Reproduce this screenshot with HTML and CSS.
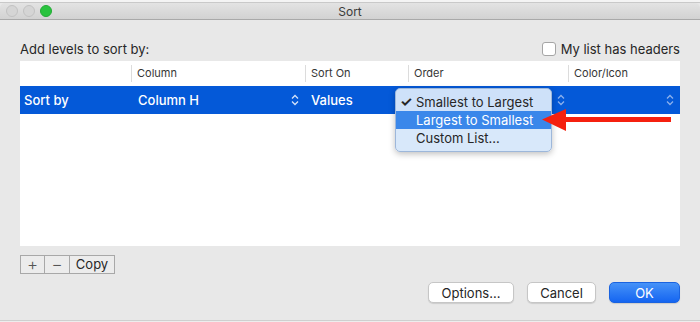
FILE: index.html
```html
<!DOCTYPE html>
<html lang="en">
<head>
    <meta charset="UTF-8">
    <title>Sort</title>
    <link rel="stylesheet" href="styles.css">
</head>
<body>
    <div class="sheet-strip"></div>
    <div class="window">
        <div class="titlebar">
            <div class="lights">
                <span class="light"></span>
                <span class="light"></span>
                <span class="light green"></span>
            </div>
            <div class="title">Sort</div>
        </div>

        <div class="content">
            <div class="top-row">
                <span>Add levels to sort by:</span>
                <label class="headers-check"><span class="box"></span>My list has headers</label>
            </div>

            <div class="table">
                <div class="row head">
                    <div class="cell c1"></div>
                    <div class="cell c2">Column</div>
                    <div class="cell c3">Sort On</div>
                    <div class="cell c4">Order</div>
                    <div class="cell c5">Color/Icon</div>
                </div>
                <div class="row selected">
                    <div class="cell c1">Sort by</div>
                    <div class="cell c2">Column H
                        <svg class="updown" width="8" height="12" viewBox="0 0 8 12"><path d="M1 4.5 L4 1.5 L7 4.5 M1 7.5 L4 10.5 L7 7.5" fill="none" stroke="currentColor" stroke-width="1.3"/></svg>
                    </div>
                    <div class="cell c3">Values</div>
                    <div class="cell c4">
                        <svg class="updown dim" width="8" height="12" viewBox="0 0 8 12"><path d="M1 4.5 L4 1.5 L7 4.5 M1 7.5 L4 10.5 L7 7.5" fill="none" stroke="currentColor" stroke-width="1.3"/></svg>
                    </div>
                    <div class="cell c5">
                        <svg class="updown dim" width="8" height="12" viewBox="0 0 8 12"><path d="M1 4.5 L4 1.5 L7 4.5 M1 7.5 L4 10.5 L7 7.5" fill="none" stroke="currentColor" stroke-width="1.3"/></svg>
                    </div>
                </div>

                <div class="menu">
                    <div class="item"><span class="check">✓</span>Smallest to Largest</div>
                    <div class="item active">Largest to Smallest</div>
                    <div class="item">Custom List...</div>
                </div>

                <svg class="arrow" width="130" height="24" viewBox="0 0 130 24">
                    <path d="M20 8 L129 8 L129 13 L20 13 Z" fill="#f5200f"/>
                    <path d="M0 10.5 L24 0 L24 22 Z" fill="#f5200f"/>
                </svg>
            </div>

            <div class="level-buttons">
                <button>+</button>
                <button>&minus;</button>
                <button class="copy">Copy</button>
            </div>

            <div class="footer">
                <button class="btn">Options...</button>
                <button class="btn">Cancel</button>
                <button class="btn ok">OK</button>
            </div>
        </div>
    </div>
</body>
</html>
```

FILE: styles.css
```css
body {
    margin: 0;
    width: 700px;
    height: 322px;
    overflow: hidden;
    background-color: #ededed;
    font-family: Inter, "Liberation Sans", sans-serif;
    font-size: 13px;
    color: #262626;
}

.sheet-strip {
    height: 3px;
    background-color: #f4f4f4;
    border-bottom: 1px solid #c9c9c9;
    box-sizing: border-box;
}

.window {
    background-color: #e8e8e8;
    height: 317px;
    border-bottom: 1px solid #cfcfcf;
}

.titlebar {
    position: relative;
    height: 16px;
    background: linear-gradient(#e3e3e3, #d2d2d2);
    border-bottom: 1px solid #a9a9a9;
    border-radius: 5px 5px 0 0;
}

.lights {
    display: flex;
    gap: 5px;
    padding: 2px 0 0 6px;
}

.light {
    width: 12px;
    height: 12px;
    border-radius: 50%;
    background-color: #d5d5d5;
    border: 1px solid #c2c2c2;
    box-sizing: border-box;
    display: inline-block;
}

.light.green {
    background-color: #29c33e;
    border-color: #22ab35;
}

.title {
    position: absolute;
    left: 0;
    right: 0;
    top: 1px;
    text-align: center;
    font-size: 12px;
    color: #3a3a3a;
}

.content {
    padding: 0 20px;
}

.top-row {
    display: flex;
    justify-content: space-between;
    align-items: center;
    height: 16px;
    padding-top: 21px;
    margin-bottom: 4px;
}

.headers-check {
    display: flex;
    align-items: center;
    gap: 5px;
}

.box {
    width: 14px;
    height: 14px;
    border: 1px solid #a5a5a5;
    border-radius: 3px;
    background-color: white;
    box-sizing: border-box;
}

.table {
    position: relative;
    background-color: white;
    height: 185px;
}

.row {
    display: flex;
}

.row.head {
    height: 24px;
    font-size: 11px;
    color: #363636;
    align-items: center;
}

.row.head .cell {
    border-left: 1px solid #dcdcdc;
    height: 17px;
    line-height: 17px;
    padding-left: 5px;
}

.row.head .c1 {
    border-left: none;
}

.row.selected {
    height: 28px;
    margin-top: 1px;
    background-color: #0459d8;
    color: white;
    font-weight: 500;
    align-items: center;
}

.cell {
    box-sizing: border-box;
    display: flex;
    align-items: center;
}

.c1 { width: 111px; }
.c2 { width: 174px; }
.c3 { width: 103px; }
.c4 { width: 160px; }
.c5 { width: 112px; }

.row.selected .c1 { padding-left: 4px; }
.row.selected .c2 { padding-left: 7px; justify-content: space-between; padding-right: 6px; }
.row.selected .c3 { padding-left: 6px; }
.row.selected .c4 { justify-content: flex-end; padding-right: 3px; }
.row.selected .c5 { justify-content: flex-end; padding-right: 6px; }

.updown {
    color: #d4e2f8;
}

.updown.dim {
    color: #8cb0ec;
}

.menu {
    position: absolute;
    left: 375px;
    top: 27px;
    width: 157px;
    padding: 4px 0;
    box-sizing: border-box;
    background-color: rgba(214, 231, 250, 0.96);
    border: 1px solid #9db7da;
    border-radius: 5px;
    box-shadow: 0 2px 6px rgba(0, 0, 0, 0.25);
}

.item {
    position: relative;
    height: 18px;
    line-height: 18px;
    padding-left: 20px;
    color: #262626;
}

.item.active {
    background-color: #3a87ea;
    color: white;
}

.check {
    position: absolute;
    left: 4px;
    font-size: 14px;
    font-weight: 700;
}

.arrow {
    position: absolute;
    left: 522px;
    top: 48px;
}

.level-buttons {
    display: flex;
    margin-top: 9px;
}

.level-buttons button {
    font-family: inherit;
    height: 19px;
    width: 25px;
    padding: 0;
    background-color: #ececec;
    border: 1px solid #a8a8a8;
    border-left: none;
    font-size: 17px;
    font-weight: 300;
    color: #555;
    line-height: 15px;
}

.level-buttons button:first-child {
    border-left: 1px solid #a8a8a8;
}

.level-buttons button.copy {
    width: 45px;
    font-size: 13px;
    font-weight: 400;
    color: #262626;
}

.footer {
    display: flex;
    justify-content: flex-end;
    gap: 13px;
    margin-top: 8px;
}

.btn {
    font-family: inherit;
    font-size: 13px;
    height: 21px;
    padding: 0;
    background-color: white;
    border: 1px solid #c6c6c6;
    border-radius: 5px;
    box-shadow: 0 1px 1px rgba(0, 0, 0, 0.12);
    color: #262626;
    width: 86px;
}

.btn:nth-child(2) {
    width: 69px;
}

.btn.ok {
    width: 71px;
    background: linear-gradient(#4592f8, #1565f1);
    border-color: #1a63e0;
    color: white;
}
```
